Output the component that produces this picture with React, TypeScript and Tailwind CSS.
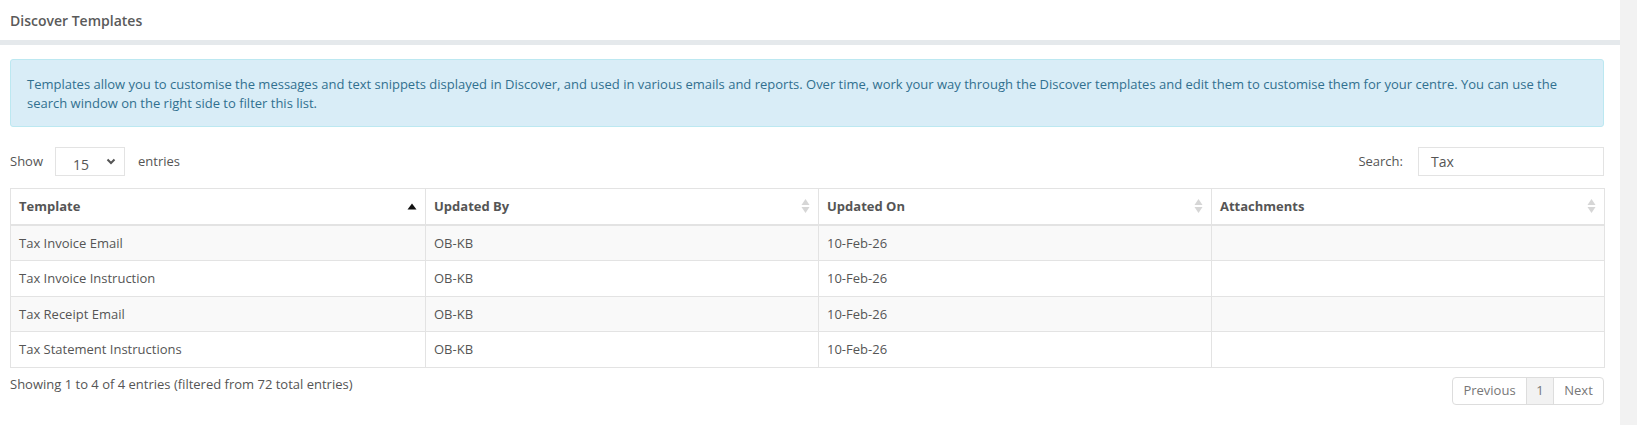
import React from "react";

const rows = [
  ["Tax Invoice Email", "OB-KB", "10-Feb-26", ""],
  ["Tax Invoice Instruction", "OB-KB", "10-Feb-26", ""],
  ["Tax Receipt Email", "OB-KB", "10-Feb-26", ""],
  ["Tax Statement Instructions", "OB-KB", "10-Feb-26", ""],
];

const SortBoth = () => (
  <svg width="9" height="16" viewBox="0 0 9 16" className="shrink-0">
    <path d="M4.5 1 L8.5 7 L0.5 7 Z" fill="#d6d6d6" />
    <path d="M4.5 15 L8.5 9 L0.5 9 Z" fill="#d6d6d6" />
  </svg>
);

const SortAsc = () => (
  <svg width="10" height="7" viewBox="0 0 10 7" className="shrink-0">
    <path d="M5 0.5 L9.5 6.5 L0.5 6.5 Z" fill="#111" />
  </svg>
);

const App = () => {
  const headers = ["Template", "Updated By", "Updated On", "Attachments"];
  return (
    <div
      className="flex h-[425px] w-full bg-white text-[#555]"
      style={{ fontFamily: '"Open Sans", "Liberation Sans", sans-serif' }}
    >
      <div className="flex-1 flex flex-col">
        {/* header */}
        <div className="h-[40px] flex items-center px-[10px]">
          <h1 className="text-[14px] font-semibold text-[#5a5a5a]">Discover Templates</h1>
        </div>
        <div className="h-[5px] bg-[#e5e9ec]" />

        <div className="px-[10px] pt-[14px] w-[1614px]">
          {/* info alert */}
          <div className="border border-[#bce8f1] bg-[#d9edf7] text-[#31708f] rounded-[3px] px-[16px] pt-[15px] pb-[13px] text-[13px] leading-[19px]">
            Templates allow you to customise the messages and text snippets displayed in Discover, and used in various
            emails and reports. Over time, work your way through the Discover templates and edit them to customise them
            for your centre. You can use the search window on the right side to filter this list.
          </div>

          {/* controls */}
          <div className="flex items-center justify-between mt-[20px] text-[13px]">
            <div className="flex items-center">
              <span>Show</span>
              <div className="ml-[12px] w-[70px] h-[29px] border border-[#e3e3e3] flex items-center justify-between pl-[17px] pr-[8px]">
                <span className="text-[14px] text-[#555] mt-[6px]">15</span>
                <svg width="10" height="7" viewBox="0 0 10 7">
                  <path d="M1.5 1.5 L5 5 L8.5 1.5" stroke="#555" strokeWidth="2" fill="none" />
                </svg>
              </div>
              <span className="ml-[13px]">entries</span>
            </div>
            <div className="flex items-center">
              <span>Search:</span>
              <div className="ml-[15px] w-[186px] h-[29px] border border-[#e3e3e3] flex items-center pl-[12px] text-[14px] text-[#555]">
                Tax
              </div>
            </div>
          </div>

          {/* table */}
          <table className="mt-[12px] w-full table-fixed border-collapse border border-[#e3e3e3] text-[13px] leading-[18.5px]">
            <colgroup>
              <col className="w-[415px]" />
              <col className="w-[393px]" />
              <col className="w-[393px]" />
              <col className="w-[393px]" />
            </colgroup>
            <thead>
              <tr className="border-b-2 border-[#e3e3e3]">
                {headers.map((h, i) => (
                  <th
                    key={h}
                    className="border-l border-[#e3e3e3] px-[8px] py-[8px] text-left font-bold text-[#555]"
                  >
                    <div className="flex items-center justify-between">
                      <span>{h}</span>
                      {i === 0 ? <SortAsc /> : <SortBoth />}
                    </div>
                  </th>
                ))}
              </tr>
            </thead>
            <tbody>
              {rows.map((r, ri) => (
                <tr
                  key={ri}
                  className={ri % 2 === 0 ? "bg-[#f9f9f9] border-t border-[#e3e3e3]" : "bg-white border-t border-[#e3e3e3]"}
                >
                  {r.map((c, ci) => (
                    <td key={ci} className="border-l border-[#e3e3e3] px-[8px] py-[8px] h-[35.5px] text-[#555]">
                      {c}
                    </td>
                  ))}
                </tr>
              ))}
            </tbody>
          </table>

          {/* footer */}
          <div className="flex justify-between items-start mt-[9px] text-[13px]">
            <div className="mt-[-2px]">Showing 1 to 4 of 4 entries (filtered from 72 total entries)</div>
            <div className="flex h-[28px] border border-[#dddddd] rounded-[4px] overflow-hidden text-[#777]">
              <div className="w-[73px] flex items-center justify-center">Previous</div>
              <div className="w-[28px] flex items-center justify-center bg-[#f2f2f2] border-l border-r border-[#dddddd]">
                1
              </div>
              <div className="w-[49px] flex items-center justify-center">Next</div>
            </div>
          </div>
        </div>
      </div>
      <div className="w-[17px] bg-[#f2f2f2]" />
    </div>
  );
};

export default App;
